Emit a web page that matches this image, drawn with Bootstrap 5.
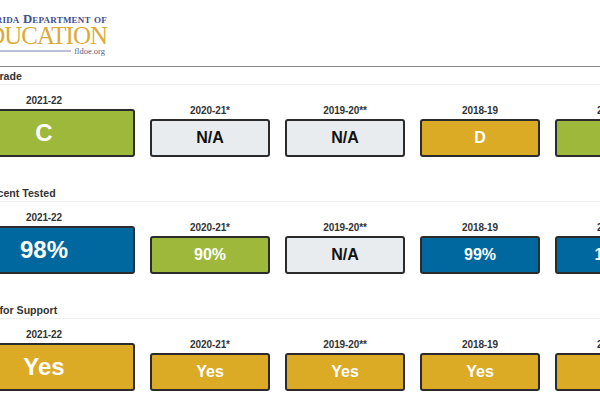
<!DOCTYPE html>
<html lang="en">
<head>
  <meta charset="UTF-8">
  <meta name="viewport" content="width=device-width, initial-scale=1">
  <title>School Report Card</title>
  <link href="https://cdn.jsdelivr.net/npm/bootstrap@5.3.0/dist/css/bootstrap.min.css" rel="stylesheet">
  <style>
    html, body { overflow: hidden; background: #fff; }
    body { font-family: "Liberation Sans", Arial, sans-serif; color: #333; }
    .page-wrap { width: 800px; margin-left: -47px; }
    .logo-wrap { height: 66px; padding-top: 12px; margin-left: -40px; width: 194px; text-align: right; font-family: "Liberation Serif", serif; }
    .logo-top { font-size: 12.8px; line-height: 14px; color: #3f4f8c; font-variant: small-caps; font-weight: 700; letter-spacing: .2px; white-space: nowrap; }
    .logo-main { font-size: 25px; line-height: 20px; color: #dbab3a; letter-spacing: -1px; white-space: nowrap; }
    .logo-foot { height: 10px; }
    .logo-line { height: 2px; background: #b9bfd6; }
    .logo-url { font-size: 8.5px; line-height: 8px; color: #555f80; margin-left: 3px; margin-right: 2px; }
    .top-rule { border-top: 1px solid #8a8a8a; }
    .sect { height: 117px; }
    .sect-title { height: 18px; font-size: 10.6px; font-weight: 700; line-height: 19px; border-bottom: 1px solid #eee; white-space: nowrap; }
    .grade-row { gap: 15px; height: 72px; }
    .grade-cell { width: 120px; flex: none; }
    .grade-cell.big { width: 182px; }
    .yr { font-size: 10px; letter-spacing: -.1px; font-weight: 700; line-height: 12px; text-align: center; margin-bottom: 2px; }
    .gbox { height: 38px; border: 2px solid #2b2b2b; border-radius: 3px; font-weight: 700; font-size: 16px; display: flex; align-items: center; justify-content: center; color: #fff; }
    .big .gbox { height: 48px; font-size: 24px; }
    .g-green { background: #9db83a; }
    .g-gold { background: #dcab26; }
    .g-blue { background: #00689f; }
    .g-na { background: #e9ecef; color: #111; }
  </style>
</head>
<body>
  <div class="page-wrap">
    <div class="logo-wrap">
      <div class="logo-top">Florida Department of</div>
      <div class="logo-main">EDUCATION</div>
      <div class="logo-foot d-flex align-items-center">
        <div class="logo-line flex-grow-1"></div>
        <div class="logo-url">fldoe.org</div>
      </div>
    </div>
    <div class="top-rule"></div>

    <div class="sect">
      <div class="sect-title">School Grade</div>
      <div class="grade-row d-flex align-items-end">
        <div class="grade-cell big"><div class="yr">2021-22</div><div class="gbox g-green">C</div></div>
        <div class="grade-cell"><div class="yr">2020-21*</div><div class="gbox g-na">N/A</div></div>
        <div class="grade-cell"><div class="yr">2019-20**</div><div class="gbox g-na">N/A</div></div>
        <div class="grade-cell"><div class="yr">2018-19</div><div class="gbox g-gold">D</div></div>
        <div class="grade-cell"><div class="yr">2017-18</div><div class="gbox g-green">C</div></div>
      </div>
    </div>

    <div class="sect">
      <div class="sect-title">Total Percent Tested</div>
      <div class="grade-row d-flex align-items-end">
        <div class="grade-cell big"><div class="yr">2021-22</div><div class="gbox g-blue">98%</div></div>
        <div class="grade-cell"><div class="yr">2020-21*</div><div class="gbox g-green">90%</div></div>
        <div class="grade-cell"><div class="yr">2019-20**</div><div class="gbox g-na">N/A</div></div>
        <div class="grade-cell"><div class="yr">2018-19</div><div class="gbox g-blue">99%</div></div>
        <div class="grade-cell"><div class="yr">2017-18</div><div class="gbox g-blue">100%</div></div>
      </div>
    </div>

    <div class="sect">
      <div class="sect-title">Selected for Support</div>
      <div class="grade-row d-flex align-items-end">
        <div class="grade-cell big"><div class="yr">2021-22</div><div class="gbox g-gold">Yes</div></div>
        <div class="grade-cell"><div class="yr">2020-21*</div><div class="gbox g-gold">Yes</div></div>
        <div class="grade-cell"><div class="yr">2019-20**</div><div class="gbox g-gold">Yes</div></div>
        <div class="grade-cell"><div class="yr">2018-19</div><div class="gbox g-gold">Yes</div></div>
        <div class="grade-cell"><div class="yr">2017-18</div><div class="gbox g-gold">Yes</div></div>
      </div>
    </div>
  </div>
  <script src="https://cdn.jsdelivr.net/npm/bootstrap@5.3.0/dist/js/bootstrap.bundle.min.js"></script>
</body>
</html>
